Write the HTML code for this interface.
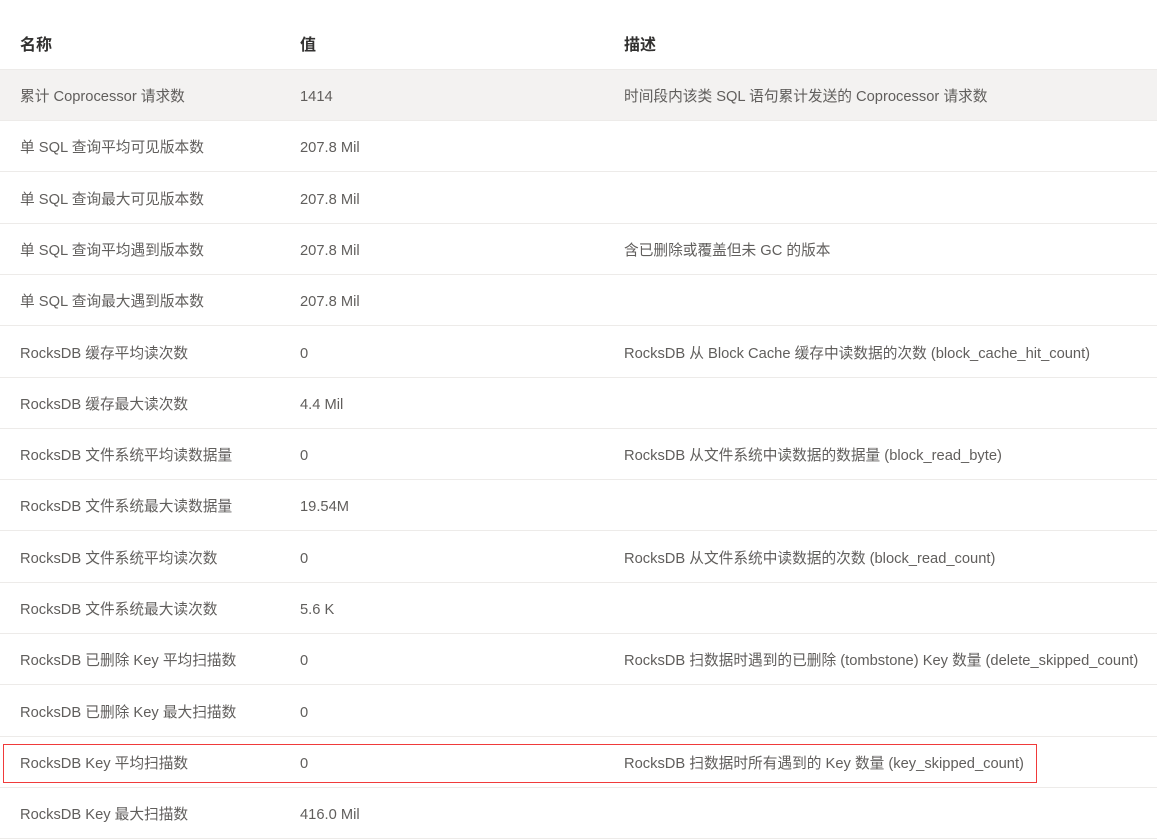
<!DOCTYPE html>
<html><head><meta charset="utf-8"><style>
body{margin:0;width:1157px;height:834px;overflow:hidden;background:#fff;font-family:"Liberation Sans","Noto Sans CJK SC",sans-serif;}
.h{position:absolute;top:34px;font-size:16px;font-weight:bold;color:#323130;line-height:24px}
.r{position:absolute;left:0;width:1157px;height:51px;border-bottom:1px solid #edebe9;box-sizing:border-box;font-size:14.7px;color:#605e5c}
.r span{position:absolute;top:17px;line-height:20px;white-space:nowrap}
.a{left:20px}.b{left:300px}.c{left:624px}
</style></head><body>
<div class="h" style="left:20px">名称</div>
<div class="h" style="left:300px">值</div>
<div class="h" style="left:624px">描述</div>
<div style="position:absolute;top:69px;left:0;width:1157px;height:1px;background:#edebe9"></div>
<div class="r" style="top:70px;background:#f3f2f1"><span class="a">累计 Coprocessor 请求数</span><span class="b">1414</span><span class="c">时间段内该类 SQL 语句累计发送的 Coprocessor 请求数</span></div>
<div class="r" style="top:121.3px"><span class="a">单 SQL 查询平均可见版本数</span><span class="b">207.8 Mil</span></div>
<div class="r" style="top:172.6px"><span class="a">单 SQL 查询最大可见版本数</span><span class="b">207.8 Mil</span></div>
<div class="r" style="top:223.9px"><span class="a">单 SQL 查询平均遇到版本数</span><span class="b">207.8 Mil</span><span class="c">含已删除或覆盖但未 GC 的版本</span></div>
<div class="r" style="top:275.2px"><span class="a">单 SQL 查询最大遇到版本数</span><span class="b">207.8 Mil</span></div>
<div class="r" style="top:326.5px"><span class="a">RocksDB 缓存平均读次数</span><span class="b">0</span><span class="c">RocksDB 从 Block Cache 缓存中读数据的次数 (block_cache_hit_count)</span></div>
<div class="r" style="top:377.8px"><span class="a">RocksDB 缓存最大读次数</span><span class="b">4.4 Mil</span></div>
<div class="r" style="top:429.1px"><span class="a">RocksDB 文件系统平均读数据量</span><span class="b">0</span><span class="c">RocksDB 从文件系统中读数据的数据量 (block_read_byte)</span></div>
<div class="r" style="top:480.4px"><span class="a">RocksDB 文件系统最大读数据量</span><span class="b">19.54M</span></div>
<div class="r" style="top:531.7px"><span class="a">RocksDB 文件系统平均读次数</span><span class="b">0</span><span class="c">RocksDB 从文件系统中读数据的次数 (block_read_count)</span></div>
<div class="r" style="top:583px"><span class="a">RocksDB 文件系统最大读次数</span><span class="b">5.6 K</span></div>
<div class="r" style="top:634.3px"><span class="a">RocksDB 已删除 Key 平均扫描数</span><span class="b">0</span><span class="c">RocksDB 扫数据时遇到的已删除 (tombstone) Key 数量 (delete_skipped_count)</span></div>
<div class="r" style="top:685.6px"><span class="a">RocksDB 已删除 Key 最大扫描数</span><span class="b">0</span></div>
<div class="r" style="top:736.9px"><span class="a">RocksDB Key 平均扫描数</span><span class="b">0</span><span class="c">RocksDB 扫数据时所有遇到的 Key 数量 (key_skipped_count)</span></div>
<div class="r" style="top:788.2px"><span class="a">RocksDB Key 最大扫描数</span><span class="b">416.0 Mil</span></div>
<div style="position:absolute;left:3px;top:744px;width:1032px;height:37px;border:1px solid #f03a3a"></div>
</body></html>
